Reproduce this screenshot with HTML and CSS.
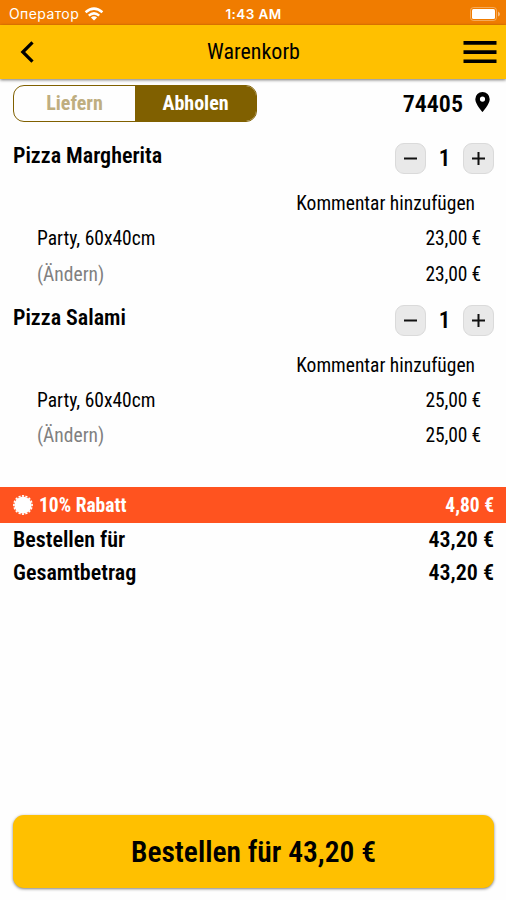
FILE: index.html
```
<!DOCTYPE html>
<html lang="de">
<head>
<meta charset="utf-8">
<title>Warenkorb</title>
<link rel="stylesheet" href="styles.css">
</head>
<body>
<div class="status">
  <span class="carrier"><span class="t">Оператор</span>
    <svg width="20" height="14" viewBox="0 0 20 14" fill="none" stroke="#fff" stroke-width="2.5"><path d="M1.6 5.2Q10-2 18.4 5.2M4.8 8.6Q10 4.2 15.2 8.6"/><path d="M10 13.6 6.9 10.5Q10 8.2 13.1 10.5Z" fill="#fff" stroke="none"/></svg>
  </span>
  <span class="clock">1:43 AM</span>
  <svg class="battery" width="31" height="14" viewBox="0 0 31 14"><rect x=".5" y=".5" width="26" height="13" rx="3" fill="none" stroke="#fff" stroke-opacity=".35"/><rect x="2" y="2" width="23" height="10" rx="1.5" fill="#fff"/><path d="M28 4.5v5q2-1 2-2.500t-2-2.500" fill="#fff" fill-opacity=".5"/></svg>
</div>
<header class="bar">
  <svg width="14" height="22" viewBox="0 0 14 22" fill="none" stroke="#000" stroke-width="3.200"><path d="M12.500 1.300 2.800 11l9.700 9.700"/></svg>
  <h1 class="title"><span class="t">Warenkorb</span></h1>
  <svg width="34" height="23" viewBox="0 0 34 23"><path d="M.5 0h33v3.700H.5zM.5 9.200h33v3.700H.5zM.5 18.400h33v3.700H.5z"/></svg>
</header>
<main>
  <div class="mode">
    <div class="toggle"><span class="opt"><span class="t">Liefern</span></span><span class="opt on"><span class="t">Abholen</span></span></div>
    <div class="zip"><span class="t">74405</span>
      <svg width="15" height="20" viewBox="0 0 15 20"><path fill-rule="evenodd" d="M7.500 0A7.200 7.200 0 0 0 .3 7.200C.3 12 7.500 20 7.500 20s7.200-8 7.200-12.800A7.200 7.200 0 0 0 7.500 0m0 4.500a2.600 2.600 0 1 1 0 5.200 2.600 2.600 0 0 1 0-5.200"/></svg>
    </div>
  </div>
  <section class="item">
    <div class="head"><h2 class="name"><span class="t">Pizza Margherita</span></h2>
      <div class="stepper"><button class="step"><svg width="13" height="13"><path d="M0 6.500h13"/></svg></button><span class="qty"><span class="t">1</span></span><button class="step"><svg width="13" height="13"><path d="M0 6.500h13M6.500 0v13"/></svg></button></div></div>
    <div class="comment"><span class="t">Kommentar hinzufügen</span></div>
    <div class="line"><span class="t">Party, 60x40cm</span><span class="t price">23,00 €</span></div>
    <div class="line"><span class="t edit">(Ändern)</span><span class="t price">23,00 €</span></div>
  </section>
  <section class="item">
    <div class="head"><h2 class="name"><span class="t">Pizza Salami</span></h2>
      <div class="stepper"><button class="step"><svg width="13" height="13"><path d="M0 6.500h13"/></svg></button><span class="qty"><span class="t">1</span></span><button class="step"><svg width="13" height="13"><path d="M0 6.500h13M6.500 0v13"/></svg></button></div></div>
    <div class="comment"><span class="t">Kommentar hinzufügen</span></div>
    <div class="line"><span class="t">Party, 60x40cm</span><span class="t price">25,00 €</span></div>
    <div class="line"><span class="t edit">(Ändern)</span><span class="t price">25,00 €</span></div>
  </section>
  <div class="discount">
    <svg width="20" height="20" viewBox="-10 -10 20 20" fill="#fff"><circle r="8.600"/><circle r="9.100" fill="none" stroke="#fff" stroke-width="1.600" pathLength="64" stroke-dasharray="2.500 1.500" stroke-dashoffset="1.250"/></svg>
    <span class="t">10% Rabatt</span><span class="t end">4,80 €</span>
  </div>
  <div class="sum"><span class="t">Bestellen für</span><span class="t">43,20 €</span></div>
  <div class="sum"><span class="t">Gesamtbetrag</span><span class="t">43,20 €</span></div>
</main>
<footer><button class="order"><span class="t">Bestellen für 43,20 €</span></button></footer>
</body>
</html>
```
FILE: styles.css
```
* { box-sizing: border-box; }
html { background: #fefefe; }
body { margin: 0; height: 900px; display: flex; flex-direction: column; background: #fefefe; color: #000; font-family: "Roboto Condensed", Roboto, sans-serif; font-stretch: 75%; font-size: 19.500px; overflow: hidden; }
svg { display: block; flex: none; }
h1, h2 { margin: 0; }
button { font: inherit; color: inherit; border: 0; padding: 0; }
.t { white-space: nowrap; }
.status { height: 25px; background: #f07c00; color: #fff; display: grid; grid-template-columns: 1fr auto 1fr; align-items: center; padding: 2px 5px 0 9px; font: 13px Inter, sans-serif; }
.carrier { display: flex; align-items: center; gap: 5px; font-size: 14px; letter-spacing: .4px; }
.clock { font-weight: 600; font-size: 13.500px; letter-spacing: .4px; margin-left: -3px; }
.battery { justify-self: end; }
.bar { height: 54px; background: #ffc000; display: flex; align-items: center; justify-content: space-between; padding: 0 9px 0 20px; box-shadow: 0 1px 3px rgba(0,0,0,.55); }
.title { font-size: 22px; font-weight: 400; margin: 0 0 2px 10px; }
main { flex: 1; }
.mode { height: 58px; padding: 6px 16px 0 13px; display: flex; justify-content: space-between; align-items: flex-start; }
.toggle { width: 244px; height: 37px; border: 1px solid #806000; border-radius: 11px; display: flex; overflow: hidden; font-size: 20px; font-weight: 700; }
.opt { flex: 1; display: flex; align-items: center; justify-content: center; padding-bottom: 2px; color: #bfae80; }
.on { background: #806000; color: #fff; }
.zip { height: 37px; display: flex; align-items: center; gap: 12px; font-size: 24px; font-weight: 600; }
.zip svg { margin-bottom: 3px; }
.item { height: 161.500px; }
.head { height: 48px; padding: 6px 12px 0 13px; display: flex; justify-content: space-between; }
.name { font-size: 22px; font-weight: 600; line-height: 26px; }
.stepper { display: flex; align-items: center; height: 31px; }
.step { width: 31px; height: 31px; background: #e9e9e9; border: 1px solid #dadada; border-radius: 9px; display: grid; place-items: center; }
.step path { stroke: #111; stroke-width: 2; }
.qty { width: 37px; text-align: center; font-size: 23px; font-weight: 600; }
.comment { height: 36px; line-height: 37px; text-align: right; padding-right: 31px; }
.line { height: 35.500px; line-height: 35.500px; padding: 0 25px 0 37px; display: flex; justify-content: space-between; }
.price { letter-spacing: -.15px; }
.edit { color: #808080; }
.discount { height: 36px; margin-top: 27px; background: #ff531f; color: #fff; display: flex; align-items: center; gap: 6px; padding: 0 12px 0 13px; font-weight: 700; }
.end { margin-left: auto; }
.sum { height: 33px; line-height: 33px; display: flex; justify-content: space-between; padding: 0 12px 0 13px; font-size: 22px; font-weight: 600; }
footer { padding: 0 12px 12px 13px; }
.order { width: 100%; height: 73px; border-radius: 11px; background: #ffc000; box-shadow: 0 1px 3px rgba(0,0,0,.5); font-size: 29.500px; font-weight: 600; display: block; }
```
